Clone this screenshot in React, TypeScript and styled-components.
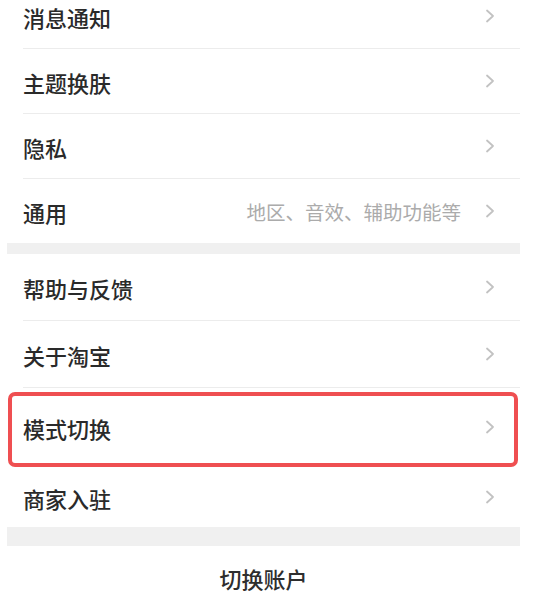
import React from "react";
import styled, { createGlobalStyle } from "styled-components";

const GlobalStyle = createGlobalStyle`
  html, body {
    margin: 0;
    padding: 0;
    background: #ffffff;
    overflow: hidden;
  }
  body {
    font-family: "Noto Sans CJK SC", "Noto Sans", sans-serif;
  }
`;

type Item = {
  label: string;
  hint?: string;
  highlighted?: boolean;
  height?: number;
};

const groups: Item[][] = [
  [
    { label: "消息通知" },
    { label: "主题换肤" },
    { label: "隐私" },
    { label: "通用", hint: "地区、音效、辅助功能等" },
  ],
  [
    { label: "帮助与反馈", height: 66 },
    { label: "关于淘宝", height: 66 },
    { label: "模式切换", highlighted: true, height: 78 },
    { label: "商家入驻", height: 60 },
  ],
];

const Chevron: React.FC = () => (
  <ChevronIcon viewBox="0 0 10 14" width="10" height="14">
    <path d="M2 1.5 L8 7 L2 12.5" fill="none" stroke="#c2c2c2" strokeWidth="1.8" strokeLinecap="round" strokeLinejoin="round" />
  </ChevronIcon>
);

const App: React.FC = () => {
  return (
    <>
      <GlobalStyle />
      <Page>
        {groups.map((group, gi) => (
          <Group key={gi} $first={gi === 0}>
            {group.map((item) => (
              <Row key={item.label} $height={item.height ?? 64} $highlighted={item.highlighted}>
                <Label>{item.label}</Label>
                <Right>
                  {item.hint && <Hint>{item.hint}</Hint>}
                  <Chevron />
                </Right>
              </Row>
            ))}
          </Group>
        ))}
        <SwitchButton>切换账户</SwitchButton>
      </Page>
    </>
  );
};

const Page = styled.div`
  margin: -16px 13px 0 7px;
  background: #f0f0f0;
  display: flex;
  flex-direction: column;
  gap: 11px;
`;

const Group = styled.div<{ $first?: boolean }>`
  background: #ffffff;
  display: flex;
  flex-direction: column;
  padding-left: 16px;
  margin-bottom: ${(p) => (p.$first ? "0" : "8px")};
`;

const Row = styled.div<{ $height: number; $highlighted?: boolean }>`
  position: relative;
  height: ${(p) => p.$height}px;
  display: flex;
  align-items: center;
  justify-content: space-between;
  padding-right: 25px;
  border-bottom: 1px solid #ececec;

  &:last-child {
    border-bottom: none;
  }

  ${(p) =>
    p.$highlighted &&
    `
    border-bottom-color: transparent;
    &::after {
      content: "";
      position: absolute;
      top: 4px;
      bottom: -1px;
      left: -15px;
      right: 2px;
      border: 4px solid #ef4f51;
      border-radius: 7px;
      pointer-events: none;
    }
  `}
`;

const Label = styled.span`
  font-size: 22px;
  font-weight: 500;
  color: #2a2a2a;
  padding-top: 1px;
`;

const Right = styled.div`
  display: flex;
  align-items: center;
  gap: 24px;
`;

const Hint = styled.span`
  font-size: 19.5px;
  color: #ababab;
`;

const ChevronIcon = styled.svg`
  display: block;
`;

const SwitchButton = styled.div`
  background: #ffffff;
  height: 64px;
  display: flex;
  align-items: center;
  justify-content: center;
  font-size: 22px;
  font-weight: 500;
  color: #2e2e2e;
`;

export default App;
